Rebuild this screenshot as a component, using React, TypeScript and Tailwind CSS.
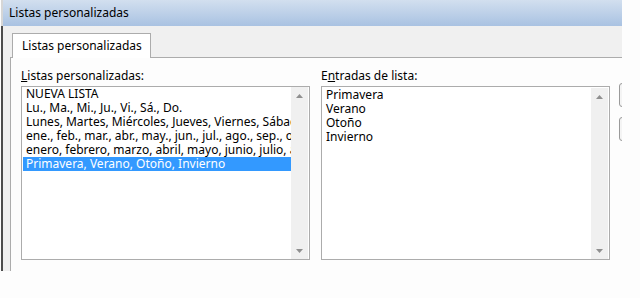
const font = { fontFamily: '"Noto Sans", "Open Sans", sans-serif' };

function Arrow({ dir }: { dir: "up" | "down" }) {
  return (
    <div className="flex h-[17px] w-full items-center justify-center">
      <svg width="7" height="4" viewBox="0 0 7 4">
        {dir === "up" ? (
          <path d="M0 4 L3.5 0 L7 4 Z" fill="#8f8f8f" />
        ) : (
          <path d="M0 0 L7 0 L3.5 4 Z" fill="#8f8f8f" />
        )}
      </svg>
    </div>
  );
}

function ListBox({
  items,
  selected,
  className,
}: {
  items: string[];
  selected?: number;
  className?: string;
}) {
  return (
    <div className={`flex h-[174px] w-[289px] border border-[#acacac] bg-white ${className ?? ""}`}>
      <div className="min-w-0 flex-1 overflow-hidden pl-[1px]">
        {items.map((t, i) => (
          <div
            key={i}
            className={`h-[14px] whitespace-nowrap pl-[3px] text-[12px] leading-[14px] ${
              i === selected ? "bg-[#3399ff] text-white" : "text-black"
            }`}
          >
            {t}
          </div>
        ))}
      </div>
      <div className="mr-[1px] flex w-[17px] flex-col justify-between bg-[#f0f0f0]">
        <Arrow dir="up" />
        <Arrow dir="down" />
      </div>
    </div>
  );
}

export default function App() {
  return (
    <div className="h-[298px] w-[640px] overflow-hidden bg-[#fdfdfd]" style={font}>
      <div className="ml-[1px] w-[621px] overflow-hidden">
        {/* Title bar */}
        <div className="flex h-[26px] items-center border-l-2 border-[#d6d6d6] bg-gradient-to-b from-[#d2dfef] to-[#a9c2e2] pl-[6px] text-[12px] text-black">
          Listas personalizadas
        </div>

        {/* Dialog body */}
        <div className="h-[245px] border-l-2 border-[#4d4d4d] bg-[#f0f0f0]">
          {/* Tab strip */}
          <div className="flex h-[31px] items-end pl-[9px]">
            <div className="relative z-10 -mb-px flex h-[25px] w-[139px] items-center border border-b-0 border-[#acacac] bg-white pl-[9px] text-[12px] text-black">
              Listas personalizadas
            </div>
          </div>

          {/* Tab panel */}
          <div className="ml-[7px] flex h-[214px] gap-[11px] border-l border-t border-[#acacac] bg-[#fdfdfd] pl-[10px] pt-[11px]">
            <div className="flex flex-col gap-[3px]">
              <div className="h-[14px] text-[12px] leading-[14px] text-black">
                <span className="underline">L</span>istas personalizadas:
              </div>
              <ListBox
                items={[
                  "NUEVA LISTA",
                  "Lu., Ma., Mi., Ju., Vi., Sá., Do.",
                  "Lunes, Martes, Miércoles, Jueves, Viernes, Sábado, Domingo",
                  "ene., feb., mar., abr., may., jun., jul., ago., sep., oct., nov., dic.",
                  "enero, febrero, marzo, abril, mayo, junio, julio, agosto",
                  "Primavera, Verano, Otoño, Invierno",
                ]}
                selected={5}
              />
            </div>

            <div className="flex flex-col gap-[3px]">
              <div className="h-[14px] text-[12px] leading-[14px] text-black">
                E<span className="underline">n</span>tradas de lista:
              </div>
              <ListBox items={["Primavera", "Verano", "Otoño", "Invierno"]} className="pt-[1px]" />
            </div>

            <div className="ml-[-2px] flex flex-col gap-[10px] pt-[14px]">
              <div className="h-[24px] w-[75px] rounded-[3px] border border-[#9a9a9a] bg-[#f4f4f4]" />
              <div className="h-[24px] w-[75px] rounded-[3px] border border-[#9a9a9a] bg-[#f4f4f4]" />
            </div>
          </div>
        </div>
      </div>
    </div>
  );
}
